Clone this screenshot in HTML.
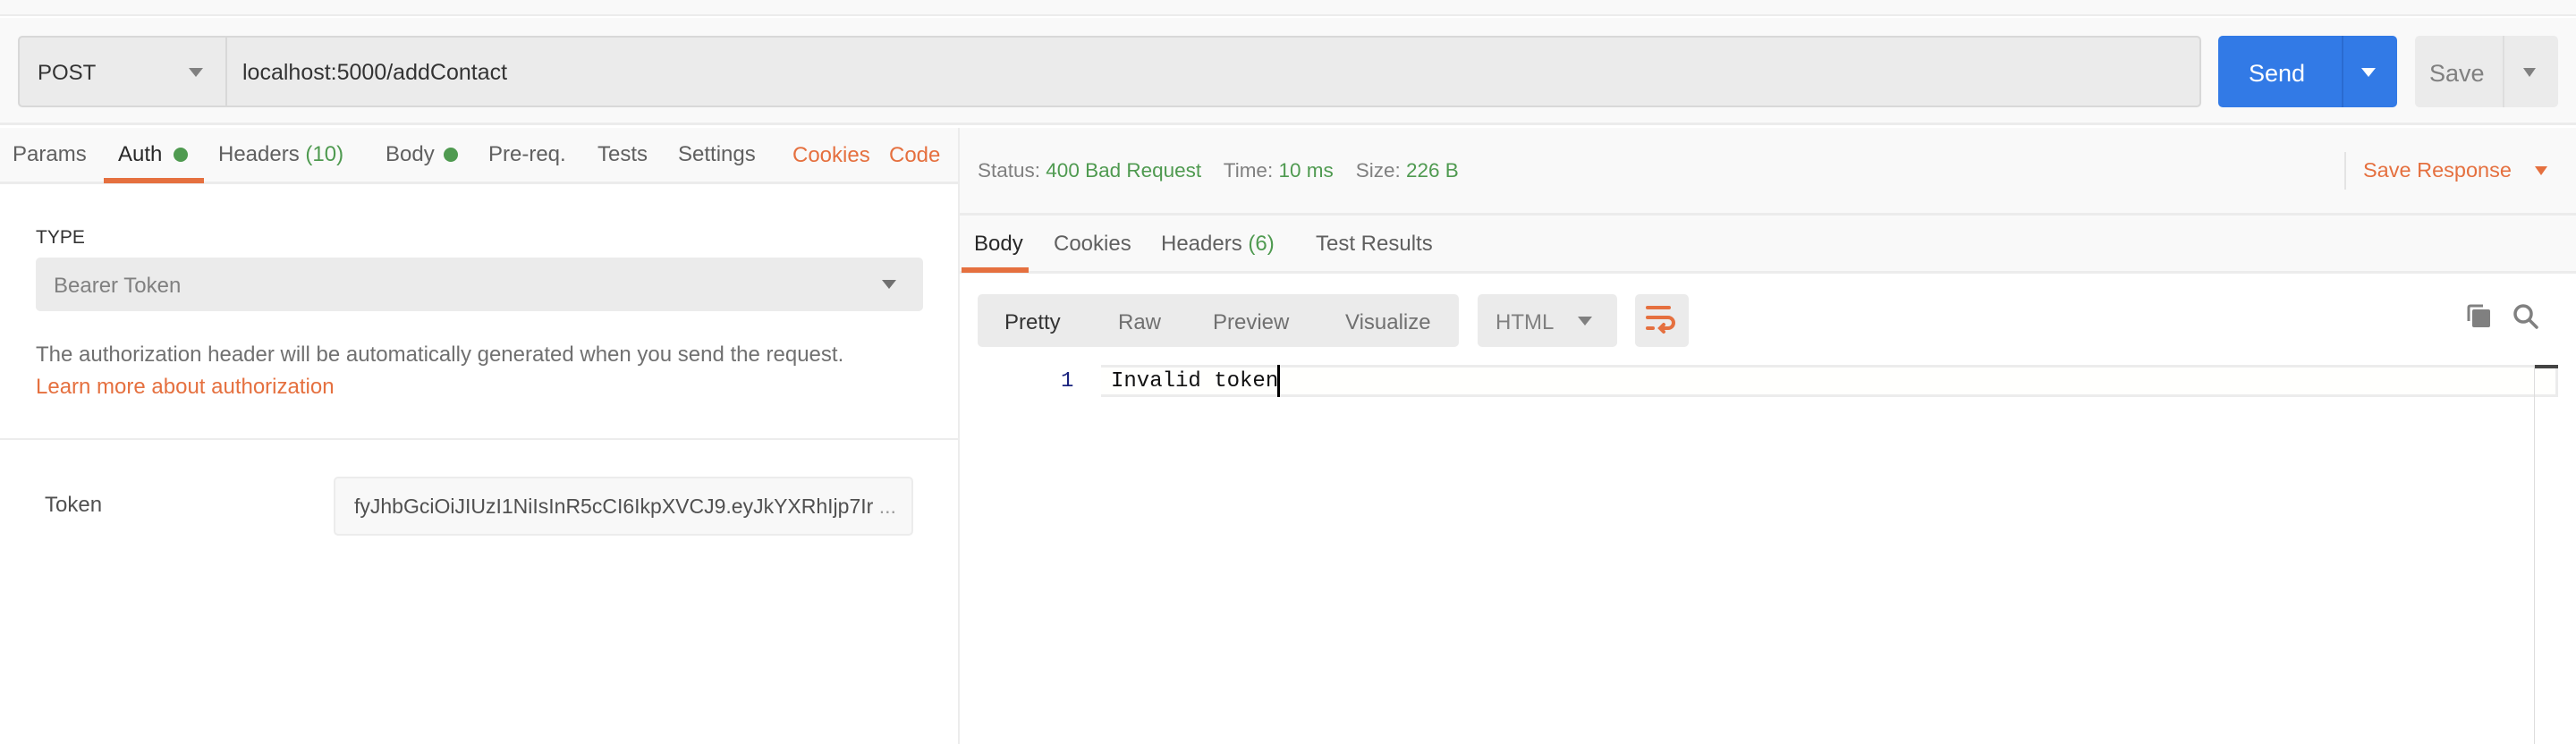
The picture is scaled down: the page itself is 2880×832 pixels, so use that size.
<!DOCTYPE html>
<html><head><meta charset="utf-8"><style>
*{margin:0;padding:0;box-sizing:border-box}
body{width:2880px;height:832px;position:relative;overflow:hidden;background:#fff;font-family:"Liberation Sans",sans-serif;color:#505050}
.a{position:absolute}
.t{position:absolute;font-size:24px;line-height:30px;white-space:nowrap}
.or{color:#e5703f}.gr{color:#4f9a50}
</style></head><body>
<div class="a" style="left:0;top:0;width:2880px;height:18px;background:#f9f9f9;border-bottom:2px solid #ececec"></div>
<div class="a" style="left:0;top:20px;width:2880px;height:120px;background:#f9f9f9;border-bottom:3px solid #ececec"></div>
<div class="a" style="left:20px;top:40px;width:2441px;height:80px;background:#ebebeb;border:2px solid #d8d8d8;border-radius:5px"></div>
<div class="a" style="left:252px;top:42px;width:2px;height:76px;background:#d8d8d8"></div>
<div class="t" style="left:42px;top:67px;color:#333;font-size:24px">POST</div>
<div class="a" style="left:211px;top:76px;border-left:8px solid transparent;border-right:8px solid transparent;border-top:10px solid #808080"></div>
<div class="t" style="left:271px;top:66px;color:#333;font-size:25px">localhost:5000/addContact</div>
<div class="a" style="left:2480px;top:40px;width:200px;height:80px;background:#327ae6;border-radius:5px"></div>
<div class="a" style="left:2618px;top:40px;width:2px;height:80px;background:#2a6bd0"></div>
<div class="t" style="left:2514px;top:67px;color:#fff;font-size:27px">Send</div>
<div class="a" style="left:2640px;top:76px;border-left:8px solid transparent;border-right:8px solid transparent;border-top:10px solid #fff"></div>
<div class="a" style="left:2700px;top:40px;width:160px;height:80px;background:#ebebeb;border-radius:5px"></div>
<div class="a" style="left:2798px;top:40px;width:2px;height:80px;background:#dedede"></div>
<div class="t" style="left:2716px;top:67px;color:#808080;font-size:27px">Save</div>
<div class="a" style="left:2821px;top:76px;border-left:7px solid transparent;border-right:7px solid transparent;border-top:10px solid #808080"></div>
<div class="a" style="left:0;top:143px;width:1071px;height:63px;background:#f9f9f9;border-bottom:3px solid #ececec"></div>
<div class="t" style="left:14px;top:158px;color:#606060">Params</div>
<div class="t" style="left:132px;top:158px;color:#282828">Auth</div>
<div class="a" style="left:194px;top:165px;width:16px;height:16px;border-radius:50%;background:#4f9a50"></div>
<div class="a" style="left:116px;top:199px;width:112px;height:6px;background:#e5703f"></div>
<div class="t" style="left:244px;top:158px;color:#606060">Headers <span class="gr">(10)</span></div>
<div class="t" style="left:431px;top:158px;color:#606060">Body</div>
<div class="a" style="left:496px;top:165px;width:16px;height:16px;border-radius:50%;background:#4f9a50"></div>
<div class="t" style="left:546px;top:158px;color:#606060">Pre-req.</div>
<div class="t" style="left:668px;top:158px;color:#606060">Tests</div>
<div class="t" style="left:758px;top:158px;color:#606060">Settings</div>
<div class="t or" style="left:886px;top:159px">Cookies</div>
<div class="t or" style="left:994px;top:159px">Code</div>
<div class="a" style="left:1071px;top:143px;width:2px;height:689px;background:#ececec"></div>
<div class="t" style="left:40px;top:251px;color:#333;font-size:21px">TYPE</div>
<div class="a" style="left:40px;top:288px;width:992px;height:60px;background:#ebebeb;border-radius:5px"></div>
<div class="t" style="left:60px;top:305px;color:#808080">Bearer Token</div>
<div class="a" style="left:986px;top:313px;border-left:8px solid transparent;border-right:8px solid transparent;border-top:10px solid #707070"></div>
<div class="t" style="left:40px;top:382px;color:#707070">The authorization header will be automatically generated when you send the request.</div>
<div class="t or" style="left:40px;top:418px">Learn more about authorization</div>
<div class="a" style="left:0;top:490px;width:1071px;height:2px;background:#ececec"></div>
<div class="t" style="left:50px;top:550px;color:#505050">Token</div>
<div class="a" style="left:373px;top:533px;width:648px;height:66px;background:#f8f8f8;border:2px solid #ececec;border-radius:5px"></div>
<div class="t" style="left:396px;top:551px;color:#505050;font-size:23px;width:610px;overflow:hidden">fyJhbGciOiJIUzI1NiIsInR5cCI6IkpXVCJ9.eyJkYXRhIjp7Ir <span style="color:#999">...</span></div>
<div class="a" style="left:1073px;top:143px;width:1807px;height:98px;background:#f9f9f9;border-bottom:3px solid #ececec"></div>
<div class="t" style="left:1093px;top:176px;font-size:22.5px;color:#808080">Status: <span class="gr">400 Bad Request</span>&nbsp;&nbsp;&nbsp; Time: <span class="gr">10 ms</span>&nbsp;&nbsp;&nbsp; Size: <span class="gr">226 B</span></div>
<div class="a" style="left:2621px;top:170px;width:2px;height:42px;background:#e4e4e4"></div>
<div class="t or" style="left:2642px;top:175px;font-size:23.5px">Save Response</div>
<div class="a" style="left:2834px;top:186px;border-left:7px solid transparent;border-right:7px solid transparent;border-top:10px solid #e5703f"></div>
<div class="a" style="left:1073px;top:241px;width:1807px;height:65px;background:#f9f9f9;border-bottom:3px solid #ececec"></div>
<div class="t" style="left:1089px;top:258px;color:#282828">Body</div>
<div class="t" style="left:1178px;top:258px;color:#606060">Cookies</div>
<div class="t" style="left:1298px;top:258px;color:#606060">Headers <span class="gr">(6)</span></div>
<div class="t" style="left:1471px;top:258px;color:#606060">Test Results</div>
<div class="a" style="left:1075px;top:299px;width:75px;height:6px;background:#e5703f"></div>
<div class="a" style="left:1093px;top:329px;width:538px;height:59px;background:#ebebeb;border-radius:5px"></div>
<div class="t" style="left:1123px;top:346px;color:#333">Pretty</div>
<div class="t" style="left:1250px;top:346px;color:#707070">Raw</div>
<div class="t" style="left:1356px;top:346px;color:#707070">Preview</div>
<div class="t" style="left:1504px;top:346px;color:#707070">Visualize</div>
<div class="a" style="left:1652px;top:329px;width:156px;height:59px;background:#ebebeb;border-radius:5px"></div>
<div class="t" style="left:1672px;top:346px;color:#808080">HTML</div>
<div class="a" style="left:1764px;top:354px;border-left:8px solid transparent;border-right:8px solid transparent;border-top:10px solid #808080"></div>
<div class="a" style="left:1828px;top:329px;width:60px;height:59px;background:#ebebeb;border-radius:5px"></div>
<svg class="a" style="left:1838px;top:339px" width="40" height="40" viewBox="0 0 40 40"><g stroke="#e5703f" stroke-width="4" stroke-linecap="round" fill="none"><path d="M4 5H28"/><path d="M4 16H27a6 6 0 0 1 0 12H20"/><path d="M4 28H10"/><path d="M22 24l-4 4 4 4"/></g></svg>
<svg class="a" style="left:2757px;top:339px" width="30" height="30" viewBox="0 0 30 30"><path d="M3 20V5q0-2 2-2h14" stroke="#808080" stroke-width="3" fill="none"/><rect x="7" y="7" width="20" height="20" rx="2" fill="#808080"/></svg>
<svg class="a" style="left:2808px;top:338px" width="32" height="32" viewBox="0 0 32 32"><circle cx="13" cy="13" r="9" stroke="#808080" stroke-width="3.5" fill="none"/><path d="M20 20l8 8" stroke="#808080" stroke-width="3.5" stroke-linecap="round"/></svg>
<div class="a" style="left:1231px;top:408px;width:1629px;height:36px;background:#fffffd;border-top:3px solid #ececec;border-bottom:3px solid #ececec;border-right:3px solid #ececec"></div>
<div class="a" style="left:2833px;top:408px;width:27px;height:4px;background:#444"></div>
<div class="a" style="left:2833px;top:408px;width:1px;height:424px;background:#ddd"></div>
<div class="t" style="left:1186px;top:412px;font-family:'Liberation Mono',monospace;color:#1a237e">1</div>
<div class="t" style="left:1242px;top:412px;font-family:'Liberation Mono',monospace;color:#111">Invalid token</div>
<div class="a" style="left:1428px;top:408px;width:3px;height:36px;background:#000"></div>
</body></html>
